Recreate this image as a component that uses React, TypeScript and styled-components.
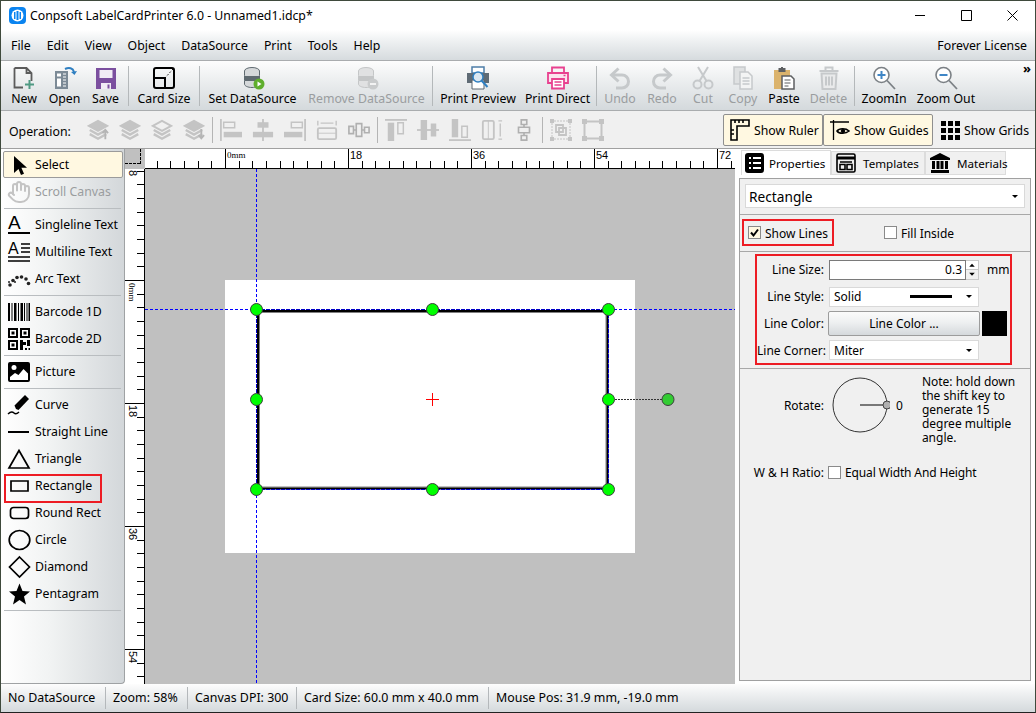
import { FC, ReactNode } from 'react';
import styled, { createGlobalStyle } from 'styled-components';
import { Hand } from 'lucide-react';

const GlobalStyle = createGlobalStyle`
  html, body { margin: 0; padding: 0; background: #fff; }
  body { font-family: "Noto Sans", "Liberation Sans", sans-serif; font-size: 12.3px; color: #000; }
  * { box-sizing: border-box; }
`;

const chrome = 'linear-gradient(180deg, #fdfdfd 0%, #eef0f1 35%, #d4d9dc 100%)';

const Window = styled.div`
  width: 1036px;
  height: 713px;
  display: flex;
  flex-direction: column;
  border: 1px solid #3f4a3c;
  border-bottom-color: #222;
  overflow: hidden;
  background: #fff;
`;

/* title bar */
const TitleBar = styled.div`
  height: 29px;
  display: flex;
  align-items: center;
  padding-left: 8px;
  background: #fff;
`;
const TitleText = styled.span`
  margin-left: 4px;
  font-size: 12.3px;
  flex: 1;
`;
const WinButton = styled.div`
  width: 46px;
  height: 29px;
  display: flex;
  align-items: center;
  justify-content: center;
`;

/* menu */
const MenuBar = styled.div`
  height: 31px;
  display: flex;
  align-items: center;
  gap: 16px;
  padding: 0 8px 0 10px;
  background: linear-gradient(180deg, #fff 0%, #f1f3f4 30%, #d6dbde 100%);
  border-bottom: 1px solid #a9acae;
`;
const MenuItem = styled.span<{ $right?: boolean }>`
  ${({ $right }) => $right && 'margin-left: auto;'}
`;

/* main toolbar */
const MainToolbar = styled.div`
  height: 50px;
  display: flex;
  align-items: stretch;
  padding-left: 3px;
  background: ${chrome};
  border-bottom: 1px solid #a9acae;
  position: relative;
`;
const ToolButton = styled.div<{ $w: number; $off?: boolean }>`
  width: ${({ $w }) => $w}px;
  display: flex;
  flex-direction: column;
  align-items: center;
  line-height: 14px;
  white-space: nowrap;
  padding-top: 5px;
  color: ${({ $off }) => ($off ? '#9a9d9f' : '#000')};
  svg { flex: none; margin-bottom: 2px; }
`;
const ToolSep = styled.div`
  width: 1px;
  margin: 5px 2px 4px;
  background: #b4b8ba;
`;
const Overflow = styled.span`
  position: absolute;
  right: 4px;
  top: 0;
  font-size: 13px;
  font-weight: 700;
  line-height: 14px;
`;

/* operation toolbar */
const OpToolbar = styled.div`
  height: 38px;
  display: flex;
  align-items: center;
  background: #f0f0f0;
  border-bottom: 1px solid #a0a0a0;
  padding: 1px 0 0 8px;
`;
const OpLabel = styled.span`
  width: 73px;
  padding-top: 2px;
`;
const OpIcon = styled.div`
  width: 32px;
  display: flex;
  justify-content: center;
`;
const OpSep = styled.div`
  width: 1px;
  height: 26px;
  margin: 0 2px;
  background: #b4b4b4;
`;
const ToggleGroup = styled.div`
  margin-left: auto;
  margin-right: 4px;
  display: flex;
  height: 32px;
`;
const Toggle = styled.div<{ $w: number; $on?: boolean }>`
  width: ${({ $w }) => $w}px;
  display: flex;
  align-items: center;
  gap: 4px;
  padding-left: 6px;
  white-space: nowrap;
  border-radius: 2px;
  border: 1px solid ${({ $on }) => ($on ? '#8f8f8f' : 'transparent')};
  background: ${({ $on }) => ($on ? '#fff8e1' : 'transparent')};
  svg { flex: none; }
`;

/* body */
const Body = styled.div`
  flex: 1;
  min-height: 0;
  display: flex;
`;
const LeftPanel = styled.div`
  width: 124px;
  height: 535px;
  flex: none;
  padding-top: 2px;
  background: linear-gradient(90deg, #ffffff 0%, #f1f3f3 40%, #d3d7da 100%);
  border-right: 1px solid #9fa2a4;
  border-bottom: 1px solid #9fa2a4;
  border-bottom-right-radius: 4px;
`;
const ShapeItem = styled.div<{ $active?: boolean; $off?: boolean; $marked?: boolean }>`
  position: relative;
  height: 27px;
  margin: 0 1px 0 2px;
  display: flex;
  align-items: center;
  gap: 4px;
  padding-left: 4px;
  white-space: nowrap;
  color: ${({ $off }) => ($off ? '#9a9d9f' : '#000')};
  background: ${({ $active }) => ($active ? '#fff8e1' : 'transparent')};
  border-radius: 2px;
  ${({ $active }) => $active && 'border: 1px solid #9b9b9b; padding-left: 3px;'}
  ${({ $marked }) =>
    $marked &&
    `&::after {
      content: '';
      position: absolute;
      left: 1px;
      top: 2px;
      width: 94px;
      height: 25px;
      border: 2px solid #ed1c24;
    }`}
`;
const ShapeSep = styled.div`
  height: 1px;
  margin: 3px 3px 2px;
  background: #b9bdc0;
`;

/* workspace */
const Workspace = styled.div`
  width: 610px;
  flex: none;
  display: grid;
  grid-template-columns: 20px 590px;
  grid-template-rows: 20px 515px;
`;
const RulerCorner = styled.div`
  background: #c0c0c0;
  position: relative;
  &::before {
    content: '';
    position: absolute;
    left: 15px;
    top: 0;
    height: 15px;
    border-left: 1px dashed #000;
  }
  &::after {
    content: '';
    position: absolute;
    left: 0;
    top: 14px;
    width: 15px;
    border-top: 1px dashed #000;
  }
`;
const RulerSvg = styled.svg`
  display: block;
  background: #fff;
  font-family: "Liberation Sans", sans-serif;
  font-size: 11px;
`;
const Canvas = styled.div`
  position: relative;
  background: #c0c0c0;
  overflow: hidden;
`;
const Card = styled.div`
  position: absolute;
  left: 80px;
  top: 111px;
  width: 410px;
  height: 273px;
  background: #fff;
`;
const Overlay = styled.svg`
  position: absolute;
  left: 0;
  top: 0;
`;

/* right panel */
const RightPanel = styled.div`
  flex: 1;
  padding: 1px 4px 0 4px;
  background: #fff;
`;
const Tabs = styled.div`
  display: flex;
  height: 28px;
  padding-left: 2px;
  align-items: flex-start;
`;
const Tab = styled.div<{ $w: number; $active?: boolean }>`
  width: ${({ $w }) => $w}px;
  height: ${({ $active }) => ($active ? 25 : 24)}px;
  margin-top: ${({ $active }) => ($active ? 0 : 1)}px;
  display: flex;
  align-items: center;
  gap: ${({ $active }) => ($active ? 4 : 7)}px;
  padding-left: ${({ $active }) => ($active ? 3 : 4)}px;
  font-size: 11.6px;
  background: ${({ $active }) => ($active ? '#fff' : '#f0f0f0')};
  border: 1px solid #dcdcdc;
  border-bottom: ${({ $active }) => ($active ? 'none' : '1px solid #dcdcdc')};
  svg { flex: none; }
`;
const PropBody = styled.div`
  width: 292px;
  height: 503px;
  background: #f0f0f0;
  border: 1px solid #a0a0a0;
`;
const Section = styled.div<{ $h: number }>`
  height: ${({ $h }) => $h}px;
  padding-top: 1px;
  display: flow-root;
  border-bottom: 1px solid #a8a8a8;
`;
const TypeCombo = styled.div`
  margin: 4px 5px 0;
  height: 24px;
  display: flex;
  align-items: center;
  justify-content: space-between;
  padding: 0 6px 0 3px;
  background: #fff;
  border: 1px solid #d9d9d9;
  font-size: 13.7px;
`;
const Caret = styled.span`
  width: 0;
  height: 0;
  border-left: 3px solid transparent;
  border-right: 3px solid transparent;
  border-top: 3px solid #000;
`;
const CheckRow = styled.div`
  display: flex;
  align-items: center;
  padding-top: 3px;
`;
const LinesMark = styled.div`
  width: 92px;
  height: 27px;
  margin-left: 2px;
  padding-left: 4px;
  display: flex;
  align-items: center;
  border: 2px solid #ed1c24;
`;
const CheckBox = styled.span<{ $on?: boolean }>`
  width: 13px;
  height: 13px;
  flex: none;
  display: inline-flex;
  align-items: center;
  justify-content: center;
  background: ${({ $on }) => ($on ? '#fff8e1' : '#fff')};
  border: 1px solid #8a8a8a;
`;
const CheckText = styled.span<{ $tight?: boolean }>`
  margin-left: 4px;
  padding-top: 1px;
  font-size: 12px;
  white-space: nowrap;
  letter-spacing: ${({ $tight }) => ($tight ? '-0.13px' : 'normal')};
`;
const FillOption = styled.div`
  margin-left: 50px;
  display: flex;
  align-items: center;
`;
const LineMark = styled.div`
  width: 257px;
  height: 111px;
  margin: 1px 0 0 15px;
  border: 2px solid #ed1c24;
  display: grid;
  grid-template-columns: 67px 150px auto;
  grid-template-rows: 27px 27px 27px 26px;
  column-gap: 5px;
  align-items: center;
  font-size: 12px;
`;
const FieldLabel = styled.span`
  text-align: right;
  white-space: nowrap;
`;
const SizeField = styled.div`
  display: flex;
  height: 20px;
`;
const SizeInput = styled.div`
  flex: 1;
  background: #fff;
  border: 1px solid #7a7a7a;
  text-align: right;
  line-height: 18px;
  padding-right: 3px;
`;
const Spinner = styled.div`
  width: 13px;
  display: flex;
  flex-direction: column;
  background: #fff;
  border: 1px solid #c8c8c8;
  border-left: none;
  svg { flex: 1; display: block; }
  svg + svg { border-top: 1px solid #c8c8c8; background: #f0f0f0; }
`;
const Unit = styled.span`
  padding-left: 3px;
`;
const Combo = styled.div`
  height: 20px;
  display: flex;
  align-items: center;
  padding: 0 6px 0 4px;
  background: #fff;
  border: 1px solid #d9d9d9;
`;
const ComboText = styled.span`
  flex: 1;
`;
const LineSample = styled.span`
  width: 42px;
  height: 3px;
  margin-right: 14px;
  background: #000;
`;
const ColorButton = styled.div`
  height: 25px;
  margin: 0 -1px;
  display: flex;
  align-items: center;
  justify-content: center;
  background: linear-gradient(180deg, #fbfbfb 0%, #eef0f1 45%, #d5d9dc 100%);
  border: 1px solid #9c9c9c;
  border-radius: 2px;
`;
const Swatch = styled.div`
  width: 25px;
  height: 25px;
  margin-left: -2px;
  background: #000;
`;
const RotateRow = styled.div`
  display: flex;
  align-items: flex-start;
  padding-top: 6px;
  font-size: 12px;
`;
const DialGroup = styled.div`
  height: 60px;
  display: flex;
  align-items: center;
`;
const RotateLabel = styled.span`
  width: 84px;
  text-align: right;
`;
const Dial = styled.svg`
  margin: 0 6px;
`;
const Note = styled.div`
  width: 104px;
  margin-left: 19px;
  line-height: 14px;
`;
const RatioRow = styled.div`
  margin-top: 19px;
  display: flex;
  align-items: center;
  height: 16px;
  font-size: 12px;
  padding-left: 13px;
`;
const RatioLabel = styled.span`
  width: 71px;
  margin-right: 4px;
  text-align: right;
  white-space: nowrap;
`;

/* status */
const StatusBar = styled.div`
  height: 28px;
  display: flex;
  align-items: center;
  background: ${chrome};
`;
const StatusItem = styled.div<{ $w?: number }>`
  width: ${({ $w }) => ($w ? `${$w}px` : 'auto')};
  height: 22px;
  line-height: 22px;
  padding-left: 7px;
  font-size: 12.4px;
  white-space: nowrap;
  ${({ $w }) => $w && 'border-right: 1px solid #b4b8bb;'}
`;

/* icons */
const Ico: FC<{ s?: number; children: ReactNode }> = ({ s = 24, children }) => (
  <svg width={s} height={s} viewBox="0 0 24 24" fill="none">
    {children}
  </svg>
);

const Db: FC<{ c1: string; c2: string }> = ({ c1, c2 }) => (
  <>
    <ellipse cx="11" cy="5" rx="7.5" ry="3.5" fill={c1} stroke={c2} />
    <path d="M3.5 5v4c0 2 3.4 3.5 7.5 3.5s7.5-1.5 7.5-3.5V5" fill={c1} stroke={c2} />
    <path d="M3.5 10v4c0 2 3.4 3.5 7.5 3.5s7.5-1.5 7.5-3.5v-4" fill={c2} stroke={c2} />
    <path d="M3.5 15v3c0 2 3.4 3.5 7.5 3.5s7.5-1.5 7.5-3.5v-3" fill={c1} stroke={c2} />
  </>
);

const icons: Record<string, ReactNode> = {
  new: (
    <Ico>
      <path d="M2.5 2h12l5 5v8M14.5 2v5h5M11 21.5H2.5V2" stroke="#5b5b5b" strokeWidth="1.8" />
      <path d="M17.5 14v9M13 18.5h9" stroke="#4f9a83" strokeWidth="2" />
    </Ico>
  ),
  open: (
    <Ico>
      <path d="M2 5h13v18H2z" fill="#7c8a96" />
      <path d="M4 7.500h4v3H4zM4 12.500h4v8H4z" fill="#fff" />
      <path d="M10 8h3M10 11h3M10 14h3M10 17h3M10 20h3" stroke="#fff" />
      <path d="M12 3c4-2 8-1 9 3" stroke="#2f7fc1" strokeWidth="2" />
      <path d="M18 6l3.500 3 2.500-4z" fill="#2f7fc1" />
    </Ico>
  ),
  save: (
    <Ico>
      <path d="M2 2h20v21H2z" fill="#7b4f9f" />
      <path d="M5.500 4h13v8h-13z" fill="#f1ecf5" />
      <path d="M7 17h10v6H7z" fill="#f1ecf5" />
      <path d="M13.500 18.500h2v4h-2z" fill="#7b4f9f" />
    </Ico>
  ),
  card: (
    <Ico>
      <rect x="2" y="2" width="20" height="20" rx="2" stroke="#000" strokeWidth="2" />
      <path d="M2 12h11v10" stroke="#000" strokeWidth="2" />
      <path d="M13 12l8-9" stroke="#000" strokeDasharray="1.500 2" />
    </Ico>
  ),
  setds: (
    <Ico>
      <Db c1="#d5d8da" c2="#5f6a70" />
      <circle cx="18" cy="18" r="5.500" fill="#5fae2d" />
      <path d="M16.500 15.500v5l4-2.500z" fill="#fff" />
    </Ico>
  ),
  rmds: (
    <Ico>
      <Db c1="#e0e1e2" c2="#c4c6c7" />
      <circle cx="18" cy="18" r="5.500" fill="#c9cbcc" />
      <path d="M15 17h6v2h-6z" fill="#f3f3f3" />
    </Ico>
  ),
  preview: (
    <Ico>
      <path d="M6 1h12v6H6z" fill="#fff" stroke="#4d7ea8" strokeWidth="1.500" />
      <path d="M1 7h22v10H1z" fill="#5f6b75" />
      <path d="M6 14h12v9H6z" fill="#fff" stroke="#5a646e" />
      <circle cx="12" cy="11" r="5" fill="#dbe8f2" stroke="#2f7fc1" strokeWidth="1.500" />
      <path d="M15.500 14.500l6 6.500" stroke="#2f7fc1" strokeWidth="2" />
    </Ico>
  ),
  direct: (
    <Ico>
      <path d="M6 1.500h12v5.500H6z" stroke="#e8418f" strokeWidth="1.800" />
      <path d="M6 17H2V7h20v10h-4" stroke="#e8418f" strokeWidth="1.800" fill="#fbe3ee" />
      <path d="M6 13h12v9.500H6z" fill="#fff" stroke="#e8418f" strokeWidth="1.800" />
      <path d="M8.500 16h7M8.500 19h7" stroke="#e8418f" strokeWidth="1.500" />
      <path d="M17.500 9.500h2" stroke="#e8418f" strokeWidth="1.500" />
    </Ico>
  ),
  undo: (
    <Ico>
      <path d="M5 9h9a6.500 6.500 0 0 1 0 13H8" stroke="#c6c9cb" strokeWidth="3" />
      <path d="M10.500 2.500L3.500 9l7 6.500" stroke="#c6c9cb" strokeWidth="3" />
    </Ico>
  ),
  redo: (
    <Ico>
      <path d="M19 9h-9a6.500 6.500 0 0 0 0 13h6" stroke="#c6c9cb" strokeWidth="3" />
      <path d="M13.500 2.500l7 6.500-7 6.500" stroke="#c6c9cb" strokeWidth="3" />
    </Ico>
  ),
  cut: (
    <Ico>
      <circle cx="6.500" cy="18.500" r="4" stroke="#c6c9cb" strokeWidth="2" />
      <circle cx="17.500" cy="18.500" r="4" stroke="#c6c9cb" strokeWidth="2" />
      <path d="M8.500 15L17 1M15.500 15L7 1" stroke="#c6c9cb" strokeWidth="2" />
    </Ico>
  ),
  copy: (
    <Ico>
      <path d="M3 1h11v17H3z" fill="#dfe1e2" stroke="#c6c9cb" strokeWidth="1.500" />
      <path d="M9 6h8l4 4v13H9z" fill="#f3f4f4" stroke="#c6c9cb" strokeWidth="1.500" />
      <path d="M11.500 12h7M11.500 15h7M11.500 18h7" stroke="#c6c9cb" strokeWidth="1.500" />
    </Ico>
  ),
  paste: (
    <Ico>
      <path d="M2 4h16v19H2z" fill="#dbb36c" />
      <path d="M6.500 2h7v4h-7z" fill="#5d5f61" />
      <path d="M9 1h2v2H9z" fill="#5d5f61" />
      <path d="M10 10h9l3 3v10H10z" fill="#fff" stroke="#5d5f61" strokeWidth="1.500" />
      <path d="M12.500 14h6M12.500 17h6M12.500 20h4" stroke="#5d5f61" />
    </Ico>
  ),
  del: (
    <Ico>
      <path d="M2.500 5h19M8.500 4V1.500h7V4" stroke="#c6c9cb" strokeWidth="2" />
      <path d="M4.500 7.500l1 15.500h13l1-15.500z" fill="#e9eaeb" stroke="#c6c9cb" strokeWidth="2" />
      <path d="M9 10.500v9M12 10.500v9M15 10.500v9" stroke="#c6c9cb" strokeWidth="2" />
    </Ico>
  ),
  zoomin: (
    <Ico>
      <circle cx="9.500" cy="9" r="7.500" stroke="#7b8085" strokeWidth="1.600" fill="#fff" />
      <path d="M15 14.500l8 8.500" stroke="#7b8085" strokeWidth="1.800" />
      <path d="M9.500 5v8M5.500 9h8" stroke="#3f86c6" strokeWidth="2" />
    </Ico>
  ),
  zoomout: (
    <Ico>
      <circle cx="9.500" cy="9" r="7.500" stroke="#7b8085" strokeWidth="1.600" fill="#fff" />
      <path d="M15 14.500l8 8.500" stroke="#7b8085" strokeWidth="1.800" />
      <path d="M5.500 9h8" stroke="#3f86c6" strokeWidth="2" />
    </Ico>
  ),
};

const G = '#c4c4c4';
const Layers: FC<{ top?: boolean; arrow?: 'up' | 'down'; solid?: boolean }> = ({ top, arrow, solid }) => (
  <Ico s={22}>
    <path d="M12 2l10 5.500-10 5.500L2 7.500z" fill={top || solid ? G : '#f0f0f0'} stroke={G} strokeWidth="2" />
    <path d="M3 12l9 5 9-5M3 16.500l9 5 9-5" stroke={G} strokeWidth="2.600" />
    {arrow === 'up' && <path d="M20 22v-9M17 15.500l3-3.500 3 3.500" stroke="#b5b5b5" strokeWidth="2" />}
    {arrow === 'down' && <path d="M20 11v9M17 17.500l3 3.500 3-3.500" stroke="#b5b5b5" strokeWidth="2" />}
  </Ico>
);

const opIcons: ReactNode[] = [
  <Layers key="a" solid arrow="up" />,
  <Layers key="b" top />,
  <Layers key="c" />,
  <Layers key="d" solid arrow="down" />,
];
const alignIcons: ReactNode[] = [
  <Ico key="a" s={22}>
    <path d="M1 0v24" stroke={G} strokeWidth="2" />
    <path d="M4 3.500h12v6H4z" stroke={G} strokeWidth="1.600" />
    <path d="M4 14h20v6H4z" fill={G} />
  </Ico>,
  <Ico key="b" s={22}>
    <path d="M12 0v24" stroke={G} strokeWidth="2" />
    <path d="M6 3.500h12v6H6z" fill={G} />
    <path d="M1 14h22v6H1z" fill={G} />
  </Ico>,
  <Ico key="c" s={22}>
    <path d="M23 0v24" stroke={G} strokeWidth="2" />
    <path d="M8 3.500h12v6H8z" stroke={G} strokeWidth="1.600" />
    <path d="M0 14h20v6H0z" fill={G} />
  </Ico>,
  <Ico key="d" s={22}>
    <path d="M2 2v5M22 2v5M5 4.500h14" stroke={G} strokeWidth="1.500" />
    <rect x="2" y="10" width="20" height="12" rx="1.500" stroke={G} strokeWidth="2" />
    <path d="M2 15.500h20" stroke={G} />
  </Ico>,
  <Ico key="e" s={22}>
    <path d="M1 8h5v8H1zM9 5h6v14H9zM18 9h5v6h-5z" stroke="#b0b0b0" strokeWidth="1.800" />
    <path d="M6 12h3M15 12h3" stroke="#b0b0b0" strokeWidth="1.800" />
  </Ico>,
];
const alignIcons2: ReactNode[] = [
  <Ico key="a" s={22}>
    <path d="M0 1h24" stroke={G} strokeWidth="2" />
    <path d="M3 4h7v20H3z" fill={G} />
    <path d="M14 4h6v12h-6z" stroke={G} strokeWidth="1.600" />
  </Ico>,
  <Ico key="b" s={22}>
    <path d="M0 12h24" stroke={G} strokeWidth="2" />
    <path d="M4 1h7v22H4zM15 5h6v14h-6z" fill={G} />
  </Ico>,
  <Ico key="c" s={22}>
    <path d="M0 23h24" stroke={G} strokeWidth="2" />
    <path d="M3 0h7v20H3z" fill={G} />
    <path d="M14 8h6v12h-6z" stroke={G} strokeWidth="1.600" />
  </Ico>,
  <Ico key="d" s={22}>
    <rect x="2" y="2" width="12" height="20" rx="1.500" stroke={G} strokeWidth="2" />
    <path d="M19 2h4M19 22h4M21 5v14" stroke={G} strokeWidth="1.500" />
    <path d="M8 2v20" stroke={G} />
  </Ico>,
  <Ico key="e" s={22}>
    <path d="M9 1h6v5H9zM6 9h12v6H6zM9 18h6v5H9z" stroke="#b0b0b0" strokeWidth="1.800" />
    <path d="M12 6v3M12 15v3" stroke="#b0b0b0" strokeWidth="1.800" />
  </Ico>,
];
const groupIcons: ReactNode[] = [
  <Ico key="a" s={24}>
    <path d="M1 1h4v4H1zM19 1h4v4h-4zM1 19h4v4H1zM19 19h4v4h-4z" fill={G} />
    <path d="M3 5v14M21 5v14M5 3h14M5 21h14" stroke={G} strokeDasharray="2 1" />
    <path d="M7 7h7v7H7zM10 10h7v7h-7z" stroke={G} strokeWidth="1.800" />
  </Ico>,
  <Ico key="b" s={24}>
    <path d="M1 1h5v5H1zM18 1h5v5h-5zM1 18h5v5H1zM18 18h5v5h-5z" fill={G} />
    <path d="M3.500 6v12M20.500 6v12M6 3.500h12M6 20.500h12" stroke={G} strokeWidth="2" />
  </Ico>,
];

const shapeIcons: Record<string, ReactNode> = {
  select: (
    <Ico>
      <path d="M7 3l0 17 4.500-4 2.500 6 3-1.200-2.600-6H20z" fill="#000" />
    </Ico>
  ),
  scroll: <Hand size={24} color="#c4c4c4" strokeWidth={2} />,
  single: (
    <Ico>
      <text x="1" y="16" fontSize="19" fontFamily="Liberation Sans, sans-serif" fill="#000">A</text>
      <path d="M1 20h22" stroke="#000" strokeWidth="2" />
    </Ico>
  ),
  multi: (
    <Ico>
      <text x="1" y="14" fontSize="16" fontFamily="Liberation Sans, sans-serif" fill="#000">A</text>
      <path d="M14 4h9M14 8h9M14 12h9M1 17h22M1 21h22" stroke="#000" strokeWidth="1.600" />
    </Ico>
  ),
  arc: (
    <Ico>
      <g fill="#222">
        <circle cx="3" cy="18" r="1.800" /><circle cx="6" cy="13.500" r="1.800" />
        <circle cx="10" cy="10.500" r="1.800" /><circle cx="14.500" cy="10" r="1.800" />
        <circle cx="19" cy="12" r="1.800" /><circle cx="21.500" cy="16.500" r="1.800" />
        <circle cx="2" cy="15" r="1" /><circle cx="8" cy="15" r="1" />
      </g>
    </Ico>
  ),
  bar1: (
    <Ico>
      <path d="M1 3h2v18H1zM4.500 3h1v18h-1zM7 3h2.500v18H7zM11 3h1v18h-1zM13.500 3h2.500v18h-2.500zM17 3h1v18h-1zM19.500 3h1v18h-1zM21.500 3h1.500v18h-1.500z" fill="#000" />
    </Ico>
  ),
  bar2: (
    <Ico>
      <path d="M1 1h10v10H1zM13 1h10v10H13zM1 13h10v10H1z" fill="#000" />
      <path d="M3 3h6v6H3zM15 3h6v6h-6zM3 15h6v6H3z" fill="#fff" />
      <path d="M4.500 4.500h3v3h-3zM16.500 4.500h3v3h-3zM4.500 16.500h3v3h-3z" fill="#000" />
      <path d="M13 13h3v10h-3zM16 15h3v3h-3zM20 13h3v6h-3zM18 21h2v2h-2zM21.500 21h1.500v2h-1.500z" fill="#000" />
    </Ico>
  ),
  picture: (
    <Ico>
      <rect x="1" y="2" width="22" height="20" rx="2" fill="#000" />
      <circle cx="7" cy="7.500" r="2.500" fill="#fff" />
      <path d="M3 17l5-4 3.500 2 5-6 4.500 4.500V20H3z" fill="#fff" />
    </Ico>
  ),
  curve: (
    <Ico>
      <path d="M1 21c3-3 5-2 6-1s3 1 5-1" stroke="#000" strokeWidth="1.400" />
      <path d="M9 16l-1.500-3.500L18 2l4 4L11.500 17z" fill="#000" />
    </Ico>
  ),
  line: (
    <Ico>
      <path d="M1 12h21" stroke="#000" strokeWidth="2" />
    </Ico>
  ),
  triangle: (
    <Ico>
      <path d="M12 3.500L2 21h20z" stroke="#000" strokeWidth="1.700" />
    </Ico>
  ),
  rect: (
    <Ico>
      <path d="M4 7h17v10H4z" stroke="#000" strokeWidth="1.700" />
    </Ico>
  ),
  round: (
    <Ico>
      <rect x="3.500" y="6.500" width="18" height="11" rx="3" stroke="#000" strokeWidth="1.700" />
    </Ico>
  ),
  circle: (
    <Ico>
      <ellipse cx="12.500" cy="12" rx="10.300" ry="9.500" stroke="#000" strokeWidth="1.700" />
    </Ico>
  ),
  diamond: (
    <Ico>
      <path d="M12.500 2l10 10-10 10-10-10z" stroke="#000" strokeWidth="1.700" />
    </Ico>
  ),
  star: (
    <Ico>
      <path d="M12.500 1.500l3 7.500 7.500.6-6 5 2 7.900-6.500-4.400-6.500 4.400 2-7.900-6-5 7.500-.6z" fill="#000" />
    </Ico>
  ),
};

const toolbarItems: ({ key: string; label: string; w: number; off?: boolean } | 'sep')[] = [
  { key: 'new', label: 'New', w: 40 },
  { key: 'open', label: 'Open', w: 41 },
  { key: 'save', label: 'Save', w: 41 },
  'sep',
  { key: 'card', label: 'Card Size', w: 66 },
  'sep',
  { key: 'setds', label: 'Set DataSource', w: 101 },
  { key: 'rmds', label: 'Remove DataSource', w: 127, off: true },
  'sep',
  { key: 'preview', label: 'Print Preview', w: 86 },
  { key: 'direct', label: 'Print Direct', w: 73 },
  'sep',
  { key: 'undo', label: 'Undo', w: 42, off: true },
  { key: 'redo', label: 'Redo', w: 42, off: true },
  { key: 'cut', label: 'Cut', w: 40, off: true },
  { key: 'copy', label: 'Copy', w: 40, off: true },
  { key: 'paste', label: 'Paste', w: 42 },
  { key: 'del', label: 'Delete', w: 47, off: true },
  'sep',
  { key: 'zoomin', label: 'ZoomIn', w: 54 },
  { key: 'zoomout', label: 'Zoom Out', w: 70 },
];

const shapeGroups: { key: string; label: string; active?: boolean; off?: boolean; marked?: boolean }[][] = [
  [
    { key: 'select', label: 'Select', active: true },
    { key: 'scroll', label: 'Scroll Canvas', off: true },
  ],
  [
    { key: 'single', label: 'Singleline Text' },
    { key: 'multi', label: 'Multiline Text' },
    { key: 'arc', label: 'Arc Text' },
  ],
  [
    { key: 'bar1', label: 'Barcode 1D' },
    { key: 'bar2', label: 'Barcode 2D' },
  ],
  [{ key: 'picture', label: 'Picture' }],
  [
    { key: 'curve', label: 'Curve' },
    { key: 'line', label: 'Straight Line' },
    { key: 'triangle', label: 'Triangle' },
    { key: 'rect', label: 'Rectangle', marked: true },
    { key: 'round', label: 'Round Rect' },
    { key: 'circle', label: 'Circle' },
    { key: 'diamond', label: 'Diamond' },
    { key: 'star', label: 'Pentagram' },
  ],
];

const STEP = 123 / 9;

const TopRuler = () => {
  const ticks = [];
  for (let k = -5; 225 + k * STEP < 735; k++) {
    const x = Math.round(80 + k * STEP) + 0.5;
    ticks.push(<line key={k} x1={x} x2={x} y1={k % 9 === 0 ? 0 : 12} y2={20} stroke="#000" />);
  }
  return (
    <RulerSvg width={590} height={20}>
      {ticks}
      <line x1={0} x2={590} y1={19.5} y2={19.5} stroke="#000" />
      <text x={82} y={9} fontSize="9" fontFamily="Liberation Serif, serif">0mm</text>
      <text x={205} y={10}>18</text>
      <text x={328} y={10}>36</text>
      <text x={451} y={10}>54</text>
      <text x={574} y={10}>72</text>
    </RulerSvg>
  );
};

const LeftRuler = () => {
  const ticks = [];
  for (let k = -8; 111 + k * STEP < 515; k++) {
    const y = Math.round(111 + k * STEP) + 0.5;
    ticks.push(<line key={k} x1={k % 9 === 0 ? 0 : 12} x2={20} y1={y} y2={y} stroke="#000" />);
  }
  const label = (t: string, y: number) => (
    <text key={t + y} x={4} y={y} transform={`rotate(90 4 ${y})`}>
      {t}
    </text>
  );
  return (
    <RulerSvg width={20} height={515}>
      {ticks}
      <line x1={19.5} x2={19.5} y1={0} y2={515} stroke="#000" />
      {label('8', 1)}
      <g fontFamily="Liberation Serif, serif" fontSize="9">{label('0mm', 114)}</g>
      {label('18', 236)}
      {label('36', 359)}
      {label('54', 482)}
    </RulerSvg>
  );
};

const Handle: FC<{ x: number; y: number; fill?: string }> = ({ x, y, fill = '#00ff00' }) => (
  <circle cx={x} cy={y} r={6} fill={fill} stroke="#3c3c3c" />
);

const handles = [
  [256.5, 309.5],
  [432.5, 309.5],
  [608.5, 309.5],
  [256.5, 399.5],
  [608.5, 399.5],
  [256.5, 489.5],
  [432.5, 489.5],
  [608.5, 489.5],
];

const CanvasOverlay = () => (
  <Overlay width={590} height={515} viewBox="145 169 590 515">
    <rect x={259.5} y={312.5} width={346.5} height={174.5} fill="none" stroke="#808080" />
    <rect x={258} y={311} width={349.5} height={177.5} fill="none" stroke="#000" strokeWidth={2} />
    <g stroke="#0000ff" strokeDasharray="3 2" shapeRendering="crispEdges">
      <line x1={256.5} x2={256.5} y1={169} y2={309} />
      <line x1={256.5} x2={256.5} y1={490} y2={684} />
      <line x1={145} x2={256} y1={309.5} y2={309.5} />
      <line x1={609} x2={735} y1={309.5} y2={309.5} />
    </g>
    <g stroke="#0000c8" strokeDasharray="4 1" shapeRendering="crispEdges">
      <line x1={256.5} x2={256.5} y1={309} y2={490} />
      <line x1={256} x2={609} y1={309.5} y2={309.5} />
      <line x1={608.5} x2={608.5} y1={309} y2={490} />
      <line x1={256} x2={609} y1={489.5} y2={489.5} />
    </g>
    <line x1={612} x2={662} y1={399.5} y2={399.5} stroke="#333" strokeDasharray="2 1" shapeRendering="crispEdges" />
    <path d="M426 399.500h13M432.500 393v13" stroke="#ff0000" shapeRendering="crispEdges" />
    {handles.map(([x, y]) => (
      <Handle key={`${x}-${y}`} x={x} y={y} />
    ))}
    <Handle x={668} y={399.5} fill="#33cc33" />
  </Overlay>
);

const Tick = () => (
  <svg width="11" height="11" viewBox="0 0 11 11">
    <path d="M2 5.500l2.500 3L9 2.500" fill="none" stroke="#000" strokeWidth="2" />
  </svg>
);

export default function App() {
  return (
    <>
      <GlobalStyle />
      <Window>
        <TitleBar>
          <svg width="17" height="17" viewBox="0 0 17 17">
            <rect width="17" height="17" rx="4" fill="#0a84f0" />
            <circle cx="8.500" cy="8.500" r="6" fill="#fff" />
            <path d="M5 5h1.500v7H5zM7.500 4h2v9h-2zM10.500 5H12v7h-1.500z" fill="#0a84f0" />
          </svg>
          <TitleText>Conpsoft LabelCardPrinter 6.0 - Unnamed1.idcp*</TitleText>
          <WinButton>
            <svg width="11" height="11"><path d="M0 5.500h10" stroke="#000" /></svg>
          </WinButton>
          <WinButton>
            <svg width="11" height="11"><path d="M.5.500h10v10H.5z" fill="none" stroke="#000" /></svg>
          </WinButton>
          <WinButton>
            <svg width="11" height="11"><path d="M.5.500l10 10M10.500.500l-10 10" stroke="#000" /></svg>
          </WinButton>
        </TitleBar>

        <MenuBar>
          {['File', 'Edit', 'View', 'Object', 'DataSource', 'Print', 'Tools', 'Help'].map((m) => (
            <MenuItem key={m}>{m}</MenuItem>
          ))}
          <MenuItem $right>Forever License</MenuItem>
        </MenuBar>

        <MainToolbar>
          {toolbarItems.map((item, i) =>
            item === 'sep' ? (
              <ToolSep key={i} />
            ) : (
              <ToolButton key={item.key} $w={item.w} $off={item.off}>
                {icons[item.key]}
                {item.label}
              </ToolButton>
            ),
          )}
          <Overflow>»</Overflow>
        </MainToolbar>

        <OpToolbar>
          <OpLabel>Operation:</OpLabel>
          {opIcons.map((ic, i) => <OpIcon key={i}>{ic}</OpIcon>)}
          <OpSep />
          {alignIcons.map((ic, i) => <OpIcon key={i}>{ic}</OpIcon>)}
          <OpSep />
          {alignIcons2.map((ic, i) => <OpIcon key={i}>{ic}</OpIcon>)}
          <OpSep />
          {groupIcons.map((ic, i) => <OpIcon key={i}>{ic}</OpIcon>)}
          <ToggleGroup>
            <Toggle $w={100} $on>
              <svg width="20" height="22" viewBox="0 0 20 22" fill="none" stroke="#000" strokeWidth="1.600">
                <path d="M1 1h18v6H7v14H1z" />
                <path d="M5 1v3M9 1v3M13 1v3M1 11h3M1 15h3" />
              </svg>
              Show Ruler
            </Toggle>
            <Toggle $w={110} $on>
              <svg width="20" height="20" viewBox="0 0 20 20" fill="none" stroke="#000">
                <path d="M0 2h19M3.500 0v20" strokeWidth="1.300" />
                <path d="M7 11c2-3 9-3 12 0-3 3-10 3-12 0z" strokeWidth="1.600" />
                <circle cx="13" cy="11" r="1.800" fill="#000" />
              </svg>
              Show Guides
            </Toggle>
            <Toggle $w={98}>
              <svg width="20" height="20" viewBox="0 0 20 20">
                <path d="M1 1h5v5H1zM8 1h5v5H8zM15 1h5v5h-5zM1 8h5v5H1zM8 8h5v5H8zM15 8h5v5h-5zM1 15h5v5H1zM8 15h5v5H8zM15 15h5v5h-5z" fill="#000" />
              </svg>
              Show Grids
            </Toggle>
          </ToggleGroup>
        </OpToolbar>

        <Body>
          <LeftPanel>
            {shapeGroups.map((group, i) => (
              <div key={i}>
                {group.map((s) => (
                  <ShapeItem key={s.key} $active={s.active} $off={s.off} $marked={s.marked}>
                    {shapeIcons[s.key]}
                    {s.label}
                  </ShapeItem>
                ))}
                <ShapeSep />
              </div>
            ))}
          </LeftPanel>

          <Workspace>
            <RulerCorner />
            <TopRuler />
            <LeftRuler />
            <Canvas>
              <Card />
              <CanvasOverlay />
            </Canvas>
          </Workspace>

          <RightPanel>
            <Tabs>
              <Tab $w={90} $active>
                <svg width="20" height="20" viewBox="0 0 20 20">
                  <rect width="19" height="20" rx="3" fill="#000" />
                  <path d="M4 4h2v2H4zM8 4h8v2H8zM4 9h2v2H4zM8 9h8v2H8zM4 14h2v2H4zM8 14h8v2H8z" fill="#fff" />
                </svg>
                Properties
              </Tab>
              <Tab $w={94}>
                <svg width="20" height="20" viewBox="0 0 20 20" fill="none" stroke="#000" strokeWidth="1.600">
                  <rect x="1" y="1" width="18" height="18" rx="1.500" />
                  <path d="M1 5h18" strokeWidth="3" />
                  <path d="M4 9h12M4 11.500h5v5H4zM11 11.500h5v5h-5z" />
                </svg>
                Templates
              </Tab>
              <Tab $w={81}>
                <svg width="20" height="20" viewBox="0 0 20 20">
                  <path d="M10 0l10 5v2H0V5zM1 17h18v3H1zM2 8h3v8H2zM6.500 8h3v8h-3zM10.500 8h3v8h-3zM15 8h3v8h-3z" fill="#000" />
                </svg>
                Materials
              </Tab>
            </Tabs>
            <PropBody>
              <Section $h={36}>
                <TypeCombo>
                  Rectangle
                  <Caret />
                </TypeCombo>
              </Section>
              <Section $h={37}>
                <CheckRow>
                  <LinesMark>
                    <CheckBox $on><Tick /></CheckBox>
                    <CheckText>Show Lines</CheckText>
                  </LinesMark>
                  <FillOption>
                    <CheckBox />
                    <CheckText>Fill Inside</CheckText>
                  </FillOption>
                </CheckRow>
              </Section>
              <Section $h={117}>
                <LineMark>
                  <FieldLabel>Line Size:</FieldLabel>
                  <SizeField>
                    <SizeInput>0.3</SizeInput>
                    <Spinner>
                      <svg viewBox="0 0 13 9"><path d="M3.500 6l3-3 3 3z" fill="#000" /></svg>
                      <svg viewBox="0 0 13 9"><path d="M3.500 3l3 3 3-3z" fill="#000" /></svg>
                    </Spinner>
                  </SizeField>
                  <Unit>mm</Unit>
                  <FieldLabel>Line Style:</FieldLabel>
                  <Combo>
                    <ComboText>Solid</ComboText>
                    <LineSample />
                    <Caret />
                  </Combo>
                  <span />
                  <FieldLabel>Line Color:</FieldLabel>
                  <ColorButton>Line Color ...</ColorButton>
                  <Swatch />
                  <FieldLabel>Line Corner:</FieldLabel>
                  <Combo>
                    <ComboText>Miter</ComboText>
                    <Caret />
                  </Combo>
                  <span />
                </LineMark>
              </Section>
              <RotateRow>
                <DialGroup>
                  <RotateLabel>Rotate:</RotateLabel>
                  <Dial width="60" height="60" viewBox="0 0 60 60">
                    <circle cx="30" cy="30" r="27" fill="none" stroke="#333" />
                    <path d="M30 30h27" stroke="#000" />
                    <circle cx="57" cy="30" r="4" fill="#b0b0b0" stroke="#444" />
                  </Dial>
                  0
                </DialGroup>
                <Note>Note: hold down the shift key to generate 15 degree multiple angle.</Note>
              </RotateRow>
              <RatioRow>
                <RatioLabel>W &amp; H Ratio:</RatioLabel>
                <CheckBox />
                <CheckText $tight>Equal Width And Height</CheckText>
              </RatioRow>
            </PropBody>
          </RightPanel>
        </Body>

        <StatusBar>
          <StatusItem $w={105}>No DataSource</StatusItem>
          <StatusItem $w={82}>Zoom: 58%</StatusItem>
          <StatusItem $w={109}>Canvas DPI: 300</StatusItem>
          <StatusItem $w={192}>Card Size: 60.0 mm x 40.0 mm</StatusItem>
          <StatusItem>Mouse Pos: 31.9 mm, -19.0 mm</StatusItem>
        </StatusBar>
      </Window>
    </>
  );
}
